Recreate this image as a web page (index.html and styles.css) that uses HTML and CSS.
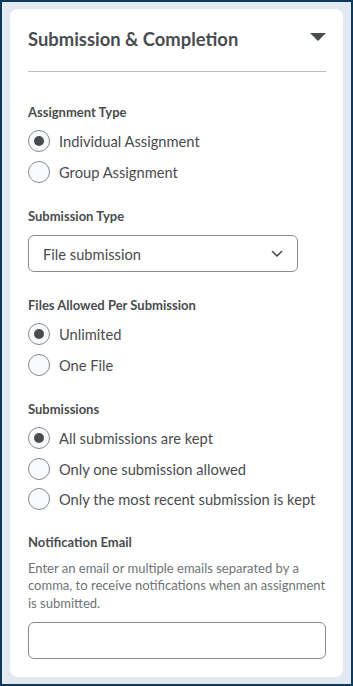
FILE: index.html
```html
<!DOCTYPE html>
<html lang="en">

<head>
    <meta charset="UTF-8">
    <meta name="viewport" content="width=device-width, initial-scale=1.0">
    <title>Submission &amp; Completion</title>
    <link rel="stylesheet" href="styles.css">
</head>

<body>
    <div class="frame">
        <section class="panel">
            <div class="panel-header">
                <h2>Submission &amp; Completion</h2>
                <span class="caret"></span>
            </div>

            <div class="field">
                <div class="field-label">Assignment Type</div>
                <label class="radio"><span class="dot checked"></span>Individual Assignment</label>
                <label class="radio"><span class="dot"></span>Group Assignment</label>
            </div>

            <div class="field">
                <div class="field-label">Submission Type</div>
                <div class="select">
                    <span>File submission</span>
                    <svg width="12" height="8" viewBox="0 0 12 8">
                        <path d="M1.5 1.5 L6 6 L10.5 1.5" fill="none" stroke="#494c4e" stroke-width="1.6" stroke-linecap="round" stroke-linejoin="round" />
                    </svg>
                </div>
            </div>

            <div class="field">
                <div class="field-label">Files Allowed Per Submission</div>
                <label class="radio"><span class="dot checked"></span>Unlimited</label>
                <label class="radio"><span class="dot"></span>One File</label>
            </div>

            <div class="field">
                <div class="field-label">Submissions</div>
                <label class="radio"><span class="dot checked"></span>All submissions are kept</label>
                <label class="radio"><span class="dot"></span>Only one submission allowed</label>
                <label class="radio"><span class="dot"></span>Only the most recent submission is kept</label>
            </div>

            <div class="field email-field">
                <div class="field-label">Notification Email</div>
                <p class="help">Enter an email or multiple emails separated by a comma, to receive notifications when an assignment is submitted.</p>
                <div class="text-input"></div>
            </div>
        </section>
    </div>
</body>

</html>
```

FILE: styles.css
```css
* {
    box-sizing: border-box;
    font-family: Lato, "Open Sans", sans-serif;
}

body {
    margin: 0;
    color: #494c4e;
}

.frame {
    height: 100vh;
    border: 2px solid #0d3a5c;
    background-color: #e3e9f1;
    padding: 7px 8px 7px 8px;
}

.panel {
    background-color: #ffffff;
    border-radius: 8px;
    height: 100%;
    padding: 0 17px 0 18px;
}

.panel-header {
    display: flex;
    justify-content: space-between;
    align-items: center;
    height: 63px;
    padding-bottom: 3px;
    border-bottom: 1px solid #b6bdc4;
}

h2 {
    margin: 0;
    font-size: 18.4px;
    font-weight: 700;
    color: #494c4e;
}

.caret {
    width: 0;
    height: 0;
    border-left: 8px solid transparent;
    border-right: 8px solid transparent;
    border-top: 8px solid #494c4e;
    margin-bottom: 4px;
}

.field {
    padding-top: 31px;
}

.field + .field {
    padding-top: 20px;
}

.field + .email-field {
    padding-top: 18px;
}

.field-label {
    font-size: 13px;
    font-weight: 700;
    line-height: 18px;
    margin-bottom: 5px;
}

.radio {
    display: flex;
    align-items: center;
    gap: 9px;
    height: 30.5px;
    font-size: 14.7px;
}

.dot {
    width: 22px;
    height: 22px;
    border: 1px solid #868c8f;
    border-radius: 50%;
    background-color: #f9fbff;
    display: flex;
    justify-content: center;
    align-items: center;
}

.dot.checked::after {
    content: "";
    width: 10px;
    height: 10px;
    border-radius: 50%;
    background-color: #494c4e;
}

.select {
    display: flex;
    justify-content: space-between;
    align-items: center;
    width: 270px;
    height: 37px;
    margin: 10px 0 4px;
    border: 1px solid #868c8f;
    border-radius: 6px;
    padding: 0 14px 0 14px;
    font-size: 14.7px;
}

.help {
    margin: 9px 0 10px;
    font-size: 13px;
    line-height: 17.5px;
    color: #6e7376;
}

.text-input {
    height: 37px;
    border: 1px solid #868c8f;
    border-radius: 6px;
}
```
